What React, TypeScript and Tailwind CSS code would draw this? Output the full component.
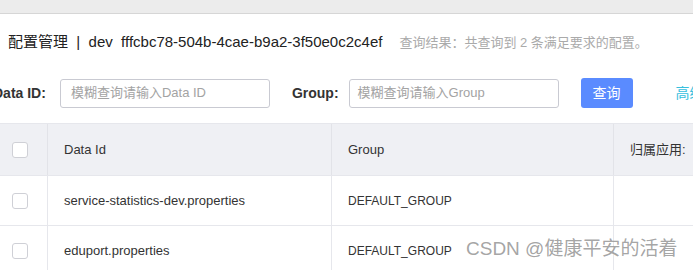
export default function App() {
  const rows = [
    { dataId: "service-statistics-dev.properties", group: "DEFAULT_GROUP" },
    { dataId: "eduport.properties", group: "DEFAULT_GROUP" },
  ];
  const cjk = "font-['Tahoma','Liberation_Sans','Noto_Sans_CJK_SC',sans-serif]";

  return (
    <div className={`relative w-[693px] h-[270px] overflow-hidden bg-white text-[#333] ${cjk}`}>
      {/* 顶部标签栏 */}
      <div className="h-[14px] bg-[#ececec] border-b border-[#d6d6d6]" />

      {/* 标题 */}
      <div className="flex items-center h-[56px] pl-[8px] pt-[1px] whitespace-nowrap">
        <span className="shrink-0 text-[15px] text-[#222]">配置管理 &nbsp;|&nbsp; dev &nbsp;fffcbc78-504b-4cae-b9a2-3f50e0c2c4ef</span>
        <span className="shrink-0 ml-[17px] text-[13px] text-[#aaa]">查询结果：共查询到 2 条满足要求的配置。</span>
      </div>

      {/* 搜索栏 */}
      <div className="flex items-center h-[30px] mt-[8px] ml-[-7px] whitespace-nowrap">
        <span className="shrink-0 text-[14px] font-bold text-[#333]">Data ID:</span>
        <div className="shrink-0 ml-[14px] w-[210px] h-[29px] border border-[#c9cad2] rounded-[3px] flex items-center px-[10px] text-[13px] text-[#a3a3a3]">
          模糊查询请输入Data ID
        </div>
        <span className="shrink-0 ml-[22px] text-[14px] font-bold text-[#333]">Group:</span>
        <div className="shrink-0 ml-[10px] w-[210px] h-[29px] border border-[#c9cad2] rounded-[3px] flex items-center px-[8px] text-[13px] text-[#a3a3a3]">
          模糊查询请输入Group
        </div>
        <button className="shrink-0 ml-[22px] w-[52px] h-[30px] rounded-[3px] bg-[#5a8bff] text-white text-[14px]">查询</button>
        <span className="shrink-0 ml-[43px] text-[14px] text-[#37c0de]">高级查询</span>
      </div>

      {/* 表格 */}
      <div className="mt-[15px] border-t border-[#e6e7ec] text-[13px]">
        <div className="grid grid-cols-[48px_284px_282px_1fr] h-[52px] bg-[#eff0f4] border-b border-[#e6e7ec]">
          <div className="flex items-center pl-[12px] border-r border-[#e2e3e8]">
            <div className="w-[16px] h-[16px] bg-white border border-[#cfd0d6] rounded-[3px]" />
          </div>
          <div className="flex items-center pl-[16px] border-r border-[#e2e3e8]">Data Id</div>
          <div className="flex items-center pl-[16px] border-r border-[#e2e3e8]">Group</div>
          <div className="flex items-center pl-[16px] whitespace-nowrap">归属应用:</div>
        </div>
        {rows.map((r) => (
          <div key={r.dataId} className="grid grid-cols-[48px_284px_282px_1fr] h-[50px] border-b border-[#e6e7ec]">
            <div className="flex items-center pl-[12px] border-r border-[#e6e7ec]">
              <div className="w-[16px] h-[16px] bg-white border border-[#cfd0d6] rounded-[3px]" />
            </div>
            <div className="flex items-center pl-[16px] border-r border-[#e6e7ec] whitespace-nowrap">{r.dataId}</div>
            <div className="flex items-center pl-[16px] border-r border-[#e6e7ec] text-[12px] whitespace-nowrap">{r.group}</div>
            <div />
          </div>
        ))}
      </div>

      {/* 水印 */}
      <div className="absolute left-[466px] top-[235px] text-[19px] text-[#9a9a9a]/90 whitespace-nowrap pointer-events-none font-['Liberation_Sans','Noto_Sans_CJK_SC',sans-serif]">
        CSDN @健康平安的活着
      </div>
    </div>
  );
}
